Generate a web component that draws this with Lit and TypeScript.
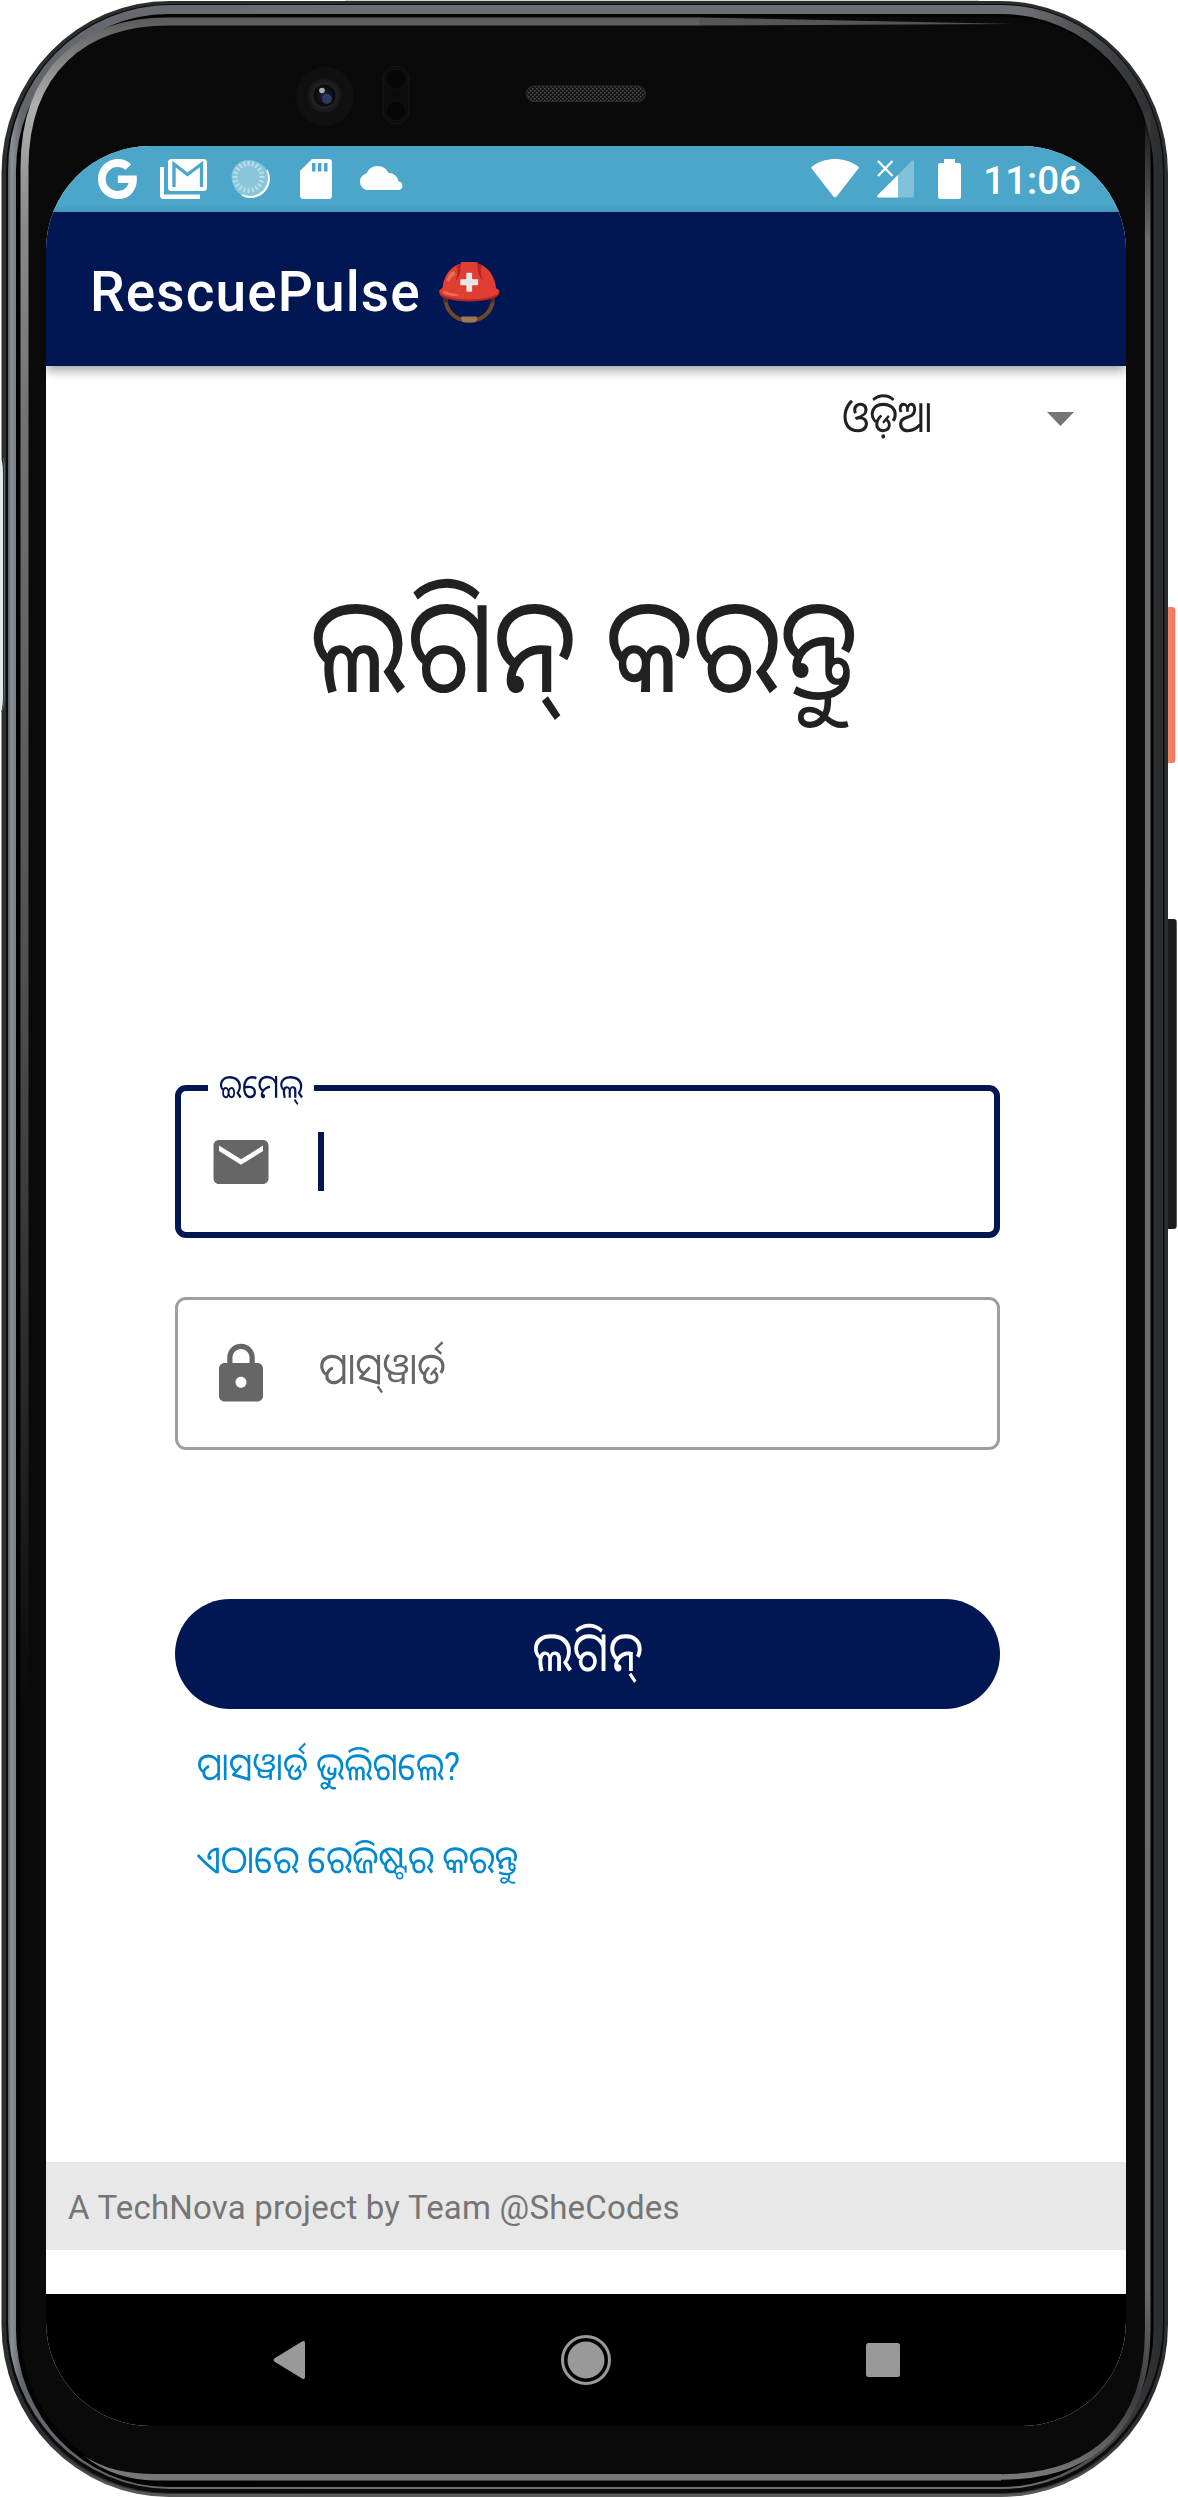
import { LitElement, html, css, svg } from "lit";
import { customElement, property } from "lit/decorators.js";

/** Handset body: metal rim, glass edge highlights, camera, earpiece and side keys. */
@customElement("phone-body")
export class PhoneBody extends LitElement {
  static styles = css`
    :host { display: block; }
    svg { display: block; width: 1178px; height: 2498px; }
  `;
  render() {
    return html`<svg viewBox="0 0 1178 2498" aria-hidden="true">
      <defs>
        <linearGradient id="rim" x1="0" y1="0" x2="1" y2="0">
          <stop offset="0" stop-color="#5f636a"></stop>
          <stop offset=".003" stop-color="#8b8f96"></stop>
          <stop offset=".012" stop-color="#63666d"></stop>
          <stop offset=".3" stop-color="#6c6e73"></stop>
          <stop offset=".88" stop-color="#6c6e73"></stop>
          <stop offset=".97" stop-color="#37383c"></stop>
          <stop offset="1" stop-color="#2a2c2e"></stop>
        </linearGradient>
        <linearGradient id="outer" x1="0" y1="0" x2="0" y2="1">
          <stop offset="0" stop-color="#2c2d2d"></stop>
          <stop offset=".97" stop-color="#2b2c2c"></stop>
          <stop offset="1" stop-color="#5a5a5a"></stop>
        </linearGradient>
        <linearGradient id="glassL" gradientUnits="userSpaceOnUse" x1="0" y1="20" x2="0" y2="1700">
          <stop offset="0" stop-color="#5c5c5c"></stop>
          <stop offset=".05" stop-color="#b0b0b0"></stop>
          <stop offset=".12" stop-color="#8a8a8a"></stop>
          <stop offset=".25" stop-color="#707070"></stop>
          <stop offset=".6" stop-color="#4c4c4c"></stop>
          <stop offset="1" stop-color="#4c4c4c" stop-opacity="0"></stop>
        </linearGradient>
        <linearGradient id="glassR" gradientUnits="userSpaceOnUse" x1="0" y1="100" x2="0" y2="2480">
          <stop offset="0" stop-color="#6e6e6e" stop-opacity="0"></stop>
          <stop offset=".06" stop-color="#6e6e6e"></stop>
          <stop offset=".92" stop-color="#6a6a6a"></stop>
          <stop offset=".965" stop-color="#3c3c3c"></stop>
          <stop offset="1" stop-color="#7a7a7a"></stop>
        </linearGradient>
        <linearGradient id="key" x1="0" y1="0" x2="1" y2="0">
          <stop offset="0" stop-color="#e8603f"></stop>
          <stop offset=".35" stop-color="#f2886f"></stop>
          <stop offset="1" stop-color="#f5745a"></stop>
        </linearGradient>
        <radialGradient id="lens">
          <stop offset="0" stop-color="#262d48"></stop>
          <stop offset=".3" stop-color="#12141f"></stop>
          <stop offset=".62" stop-color="#0a0a0c"></stop>
          <stop offset=".68" stop-color="#222224"></stop>
          <stop offset="1" stop-color="#161618"></stop>
        </radialGradient>
        <pattern id="mesh" width="4" height="4" patternUnits="userSpaceOnUse">
          <rect width="4" height="4" fill="#141414"></rect>
          <rect width="1.6" height="1.6" fill="#484848"></rect>
          <rect x="2" y="2" width="1.6" height="1.6" fill="#484848"></rect>
        </pattern>
      </defs>
      <rect x="1164" y="607" width="11.300" height="156" rx="3" fill="url(#key)"></rect>
      <rect x="1164" y="919" width="12.700" height="310" rx="3" fill="#1c1c1c"></rect>
      <path d="M345 1H979" stroke="#cfd8d4" stroke-width="2"></path>
      <rect x="1.5" y="1" width="1166.5" height="2496" rx="168" ry="172" fill="url(#outer)"></rect>
      <rect x="3" y="3" width="1164" height="2491" rx="166" ry="170" fill="#2e302f"></rect>
      <rect x="6" y="4" width="1158.500" height="2489" rx="164" ry="168" fill="#0b0b0b"></rect>
      <rect x="8" y="5" width="1155" height="2484" rx="162" ry="166" fill="url(#rim)"></rect>
      <rect x="16" y="14" width="1137.500" height="2473" rx="152" ry="157" fill="#030303"></rect>
      <rect x="20.500" y="17" width="1131" height="2464" rx="147" ry="152" fill="#0a0a0b"></rect>
      <path d="M24.500 1700V168C24.500 70 84 21.500 168 21.500H700" fill="none" stroke="url(#glassL)" stroke-width="8"></path>
      <path d="M699 17.500L1014 24L699 25.500Z" fill="#555"></path>
      <path d="M1147.700 110V2330C1147.700 2424 1096 2477 1000 2477" fill="none" stroke="url(#glassR)" stroke-width="5.500"></path>
      <path d="M84 2456C104 2469 128 2474 155 2474H1001V2480.500H155C128 2480 104 2472 84 2456Z" fill="#777"></path>
      <path d="M3 458C5 462 4.500 470 4.500 480V690C4.500 700 4 706 1.500 712" fill="none" stroke="#5b6866" stroke-width="1"></path>
      <path d="M0 460H1.500C3 464 3 470 3 480V690C3 700 3 704 1.500 710H0Z" fill="#e6eae9"></path>
      <ellipse cx="325" cy="96.500" rx="29" ry="29.500" fill="#101011"></ellipse>
      <circle cx="324.500" cy="95.500" r="17" fill="url(#lens)"></circle>
      <circle cx="327" cy="99" r="5" fill="#2d3a66"></circle>
      <circle cx="322" cy="90.500" r="2.800" fill="#a9abb2"></circle>
      <rect x="383" y="66" width="26" height="58" rx="13" fill="#0c0c0d" stroke="#161617"></rect>
      <circle cx="396" cy="79" r="10" fill="#060607" stroke="#121213"></circle>
      <circle cx="396" cy="111" r="10" fill="#060607" stroke="#121213"></circle>
      <rect x="526.500" y="86" width="119" height="15.500" rx="7.500" fill="url(#mesh)" stroke="#2b2b2b"></rect>
    </svg>`;
  }
}

const tickAngles = Array.from({ length: 20 }, (_, i) => i * 18);

@customElement("status-bar")
export class StatusBar extends LitElement {
  @property() time = "";
  static styles = css`
    :host { display: flex; height: 66px; background: #4ba6c9; color: #fff; }
    .bar { flex: 1; display: flex; justify-content: space-between; align-items: flex-start; padding: 13px 45px 0 52px; }
    .group { display: flex; align-items: flex-start; }
    svg { display: block; fill: #fff; flex: none; }
    .mail { margin-left: 23px; }
    .sync { margin-left: 24px; }
    .card { margin-left: 30px; }
    .cloud { margin: 6px 0 0 28px; }
    .signal { margin: 1px 0 0 18px; }
    .battery { margin-left: 24px; }
    .time { font-size: 38.500px; font-weight: 500; line-height: 44px; margin-left: 22px; }
  `;
  render() {
    return html`<div class="bar">
      <div class="group">
        <svg width="39" height="40" viewBox="2.543 2 19.660 20" preserveAspectRatio="none"><path d="M12.545 10.239v3.821h5.445c-.712 2.315-2.647 3.972-5.445 3.972a6.033 6.033 0 1 1 0-12.064c1.498 0 2.866.549 3.921 1.453l2.814-2.814A9.969 9.969 0 0 0 12.545 2C7.021 2 2.543 6.477 2.543 12s4.478 10 10.002 10c8.396 0 10.249-7.850 9.426-11.748z"></path></svg>
        <svg class="mail" width="47" height="40" viewBox="0 0 47 40">
          <path d="M0 8h4v27.500h36V40H3.500A3.500 3.500 0 0 1 0 36.500z"></path>
          <rect x="8" y="0" width="39" height="32" rx="3.500"></rect>
          <path d="M14 28V5L27.500 15.500L41.500 5V28" fill="none" stroke="#4ba6c9" stroke-width="3.300"></path>
        </svg>
        <svg class="sync" width="39" height="40" viewBox="0 0 39 40">
          <circle cx="20" cy="20.500" r="18.500" opacity=".35"></circle>
          <path d="M36 11A18.500 18.500 0 0 1 11 36A18.800 18.800 0 0 0 36 11Z" stroke="#fff" stroke-width="1.500"></path>
          <circle cx="17.500" cy="18" r="17" fill="#8ac5da"></circle>
          ${tickAngles.map((a) => svg`<path d="M17.500 2V7" stroke="#b9dfea" stroke-width="2" transform="rotate(${a} 17.500 18)"></path>`)}
        </svg>
        <svg class="card" width="32" height="40" viewBox="0 0 32 40">
          <path d="M12 0H28.500A3.500 3.500 0 0 1 32 3.500V36.500A3.500 3.500 0 0 1 28.500 40H3.500A3.500 3.500 0 0 1 0 36.500V12Z"></path>
          <path d="M12 4h3.500v8.500H12zM18 4h3.500v8.500H18zM24 4h3.500v8.500H24z" fill="#4ba6c9"></path>
        </svg>
        <svg class="cloud" width="44" height="25" viewBox="0 0 44 25"><path d="M8 25A8 8 0 0 1 0 17C0 12.500 3 9 6.500 8.500A12 12 0 0 1 28.500 8A9.500 9.500 0 0 1 38.500 16.200A4.600 4.600 0 0 1 39.500 25Z"></path></svg>
      </div>
      <div class="group">
        <svg width="48" height="39" viewBox="0 0 48 39"><path d="M1 10Q-.5 8.500 1.200 7.300C15-2.400 33-2.400 46.800 7.300Q48.500 8.500 47 10L26 37Q24 39.500 22 37Z"></path></svg>
        <svg class="signal" width="37" height="38" viewBox="0 0 37 38">
          <path d="M35 .8Q37 0 37 2V35Q37 37.500 34.500 37.500H2Q-.8 37.500.8 35Z" opacity=".3"></path>
          <path d="M21 15V37.500H2Q-.8 37.500.8 35Z"></path>
          <path d="M1 1L15.500 16M15.500 1L1 16" stroke="#fff" stroke-width="2.300"></path>
        </svg>
        <svg class="battery" width="23" height="40" viewBox="0 0 23 40"><path d="M6 0H17V4H20.500Q23 4 23 6.500V37.500Q23 40 20.500 40H2.500Q0 40 0 37.500V6.500Q0 4 2.500 4H6Z"></path></svg>
        <span class="time">${this.time}</span>
      </div>
    </div>`;
  }
}

/** Outlined text field; the label sits in the border notch while focused. */
@customElement("outlined-field")
export class OutlinedField extends LitElement {
  @property() label = "";
  @property() icon = "";
  @property({ type: Boolean }) focused = false;
  static styles = css`
    :host { display: block; height: 153px; }
    .box { position: relative; box-sizing: border-box; height: 153px; display: flex; align-items: center;
      border: 3px solid #9e9e9e; border-radius: 11px; padding-left: 30px; }
    .box.on { border: 6px solid #001753; padding-left: 27px; }
    .icon { display: block; width: 66px; height: 66px; fill: #666; }
    .hint { margin: -9px 0 0 45px; font-size: 44px; line-height: 56px; color: #666; white-space: nowrap;
      transform: scaleX(.88); transform-origin: 0 50%; }
    .caret { width: 6px; height: 59px; margin-left: 44px; background: #001753; }
    .notch { position: absolute; left: 27px; top: -25px; width: 106px; height: 42px; background: #fff; }
    .notch span { display: block; padding-left: 11px; font-size: 33px; line-height: 42px; color: #001753;
      white-space: nowrap; transform: scaleX(.88); transform-origin: 11px 50%; }
  `;
  render() {
    const path = this.icon === "mail"
      ? svg`<path d="M20 4H4c-1.100 0-1.990.9-1.990 2L2 18c0 1.100.9 2 2 2h16c1.100 0 2-.9 2-2V6c0-1.100-.9-2-2-2zm0 4l-8 5-8-5V6l8 5 8-5v2z"></path>`
      : svg`<path d="M18 8h-1V6c0-2.760-2.240-5-5-5S7 3.240 7 6v2H6c-1.100 0-2 .9-2 2v10c0 1.100.9 2 2 2h12c1.100 0 2-.9 2-2V10c0-1.100-.9-2-2-2zm-6 9c-1.100 0-2-.9-2-2s.9-2 2-2 2 .9 2 2-.9 2-2 2zm3.100-9H8.900V6c0-1.710 1.390-3.100 3.100-3.100s3.100 1.390 3.100 3.100v2z"></path>`;
    return html`<div class="box ${this.focused ? "on" : ""}">
      ${this.focused ? html`<div class="notch"><span>${this.label}</span></div>` : ""}
      <svg class="icon" viewBox="0 0 24 24">${path}</svg>
      ${this.focused ? html`<div class="caret"></div>` : html`<div class="hint">${this.label}</div>`}
    </div>`;
  }
}

@customElement("app-root")
export class AppRoot extends LitElement {
  static styles = css`
    :host { display: block; width: 1178px; height: 2498px; background: #fff; overflow: hidden;
      font-family: "Roboto", "Noto Sans Oriya", "Noto Sans", sans-serif; }
    .device { display: grid; }
    .device > * { grid-area: 1 / 1; }
    .screen { z-index: 1; width: 1080px; height: 2280px; margin: 146px 0 0 46px; display: flex; flex-direction: column;
      background: #fff; border-radius: 104px; overflow: hidden; }
    .appbar { flex: none; z-index: 1; box-sizing: border-box; height: 154px; display: flex; align-items: center; padding: 6px 0 0 44px;
      background: #001753; box-shadow: 0 4px 11px rgba(0, 0, 0, .4); color: #fff; white-space: pre;
      font-size: 55px; font-weight: 500; letter-spacing: 1.100px; line-height: 64px; }
    .emoji { filter: brightness(.92); }
    .page { flex: 1; display: flex; flex-direction: column; }
    .lang { height: 102px; display: flex; align-items: center; justify-content: flex-end; gap: 115px; padding-right: 52px;
      font-size: 44px; line-height: 56px; color: #212121; }
    .lang .name { transform: scaleX(.88); transform-origin: 100% 50%; }
    .arrow { display: block; width: 27px; height: 14px; fill: #757575; margin-top: 4px; }
    h1 { margin: 99px 0 0; font-size: 132px; font-weight: 400; line-height: 160px; color: #212121; text-align: center;
      white-space: nowrap; transform: translateX(-2px) scaleX(.883); }
    .form { margin: 358px 126px 0 129px; display: flex; flex-direction: column; }
    .second { margin-top: 59px; }
    .submit { margin-top: 149px; height: 110px; box-sizing: border-box; padding: 0 0 4px; border: 0; border-radius: 55px;
      background: #001753; color: #fff; font: inherit; font-size: 55px; line-height: 60px; }
    .submit span { display: inline-block; transform: scaleX(.88); }
    .links { margin: 32px 0 0 22px; display: flex; flex-direction: column; gap: 41px; font-size: 38.500px; line-height: 52px;
      color: #0288d1; white-space: nowrap; }
    .links a { color: inherit; text-decoration: none; transform-origin: 0 50%; }
    .forgot { transform: scaleX(.88); }
    .register { transform: scaleX(.906); }
    .credit { margin: auto 0 44px; box-sizing: border-box; height: 88px; padding: 4px 0 0 22px; background: #e8e8e8; color: #757575;
      font-size: 33px; line-height: 84px; letter-spacing: .200px; }
    .nav { flex: none; height: 132px; background: #000; display: flex; justify-content: center; align-items: center; gap: 247px; }
    .nav svg { display: block; fill: #999; width: 50px; height: 50px; }
  `;
  render() {
    return html`<div class="device">
      <phone-body></phone-body>
      <main class="screen">
        <status-bar time="11:06"></status-bar>
        <header class="appbar"><span>RescuePulse </span><span class="emoji">⛑️</span></header>
        <section class="page">
          <div class="lang">
            <span class="name">ଓଡ଼ିଆ</span>
            <svg class="arrow" viewBox="0 0 27 14"><path d="M0 0H27L13.500 14Z"></path></svg>
          </div>
          <h1>ଲଗିନ୍ କରନ୍ତୁ</h1>
          <div class="form">
            <outlined-field label="ଇମେଲ୍" icon="mail" focused></outlined-field>
            <outlined-field class="second" label="ପାସ୍&#8204;ୱାର୍ଡ" icon="lock"></outlined-field>
            <button class="submit"><span>ଲଗିନ୍</span></button>
            <div class="links">
              <a class="forgot">ପାସୱାର୍ଡ ଭୁଲିଗଲେ?</a>
              <a class="register">ଏଠାରେ ରେଜିଷ୍ଟର କରନ୍ତୁ</a>
            </div>
          </div>
          <footer class="credit">A TechNova project by Team @SheCodes</footer>
        </section>
        <nav class="nav">
          <svg viewBox="0 0 50 50"><path d="M11 27Q8 25 11 23L38 6.500Q41 5 41 8V42Q41 45 38 43.500Z"></path></svg>
          <svg viewBox="0 0 50 50"><circle cx="25" cy="25" r="23.500" fill="none" stroke="#999" stroke-width="3"></circle><circle cx="25" cy="25" r="18.500"></circle></svg>
          <svg viewBox="0 0 50 50"><rect x="8" y="8" width="34" height="34" rx="2.500"></rect></svg>
        </nav>
      </main>
    </div>`;
  }
}
